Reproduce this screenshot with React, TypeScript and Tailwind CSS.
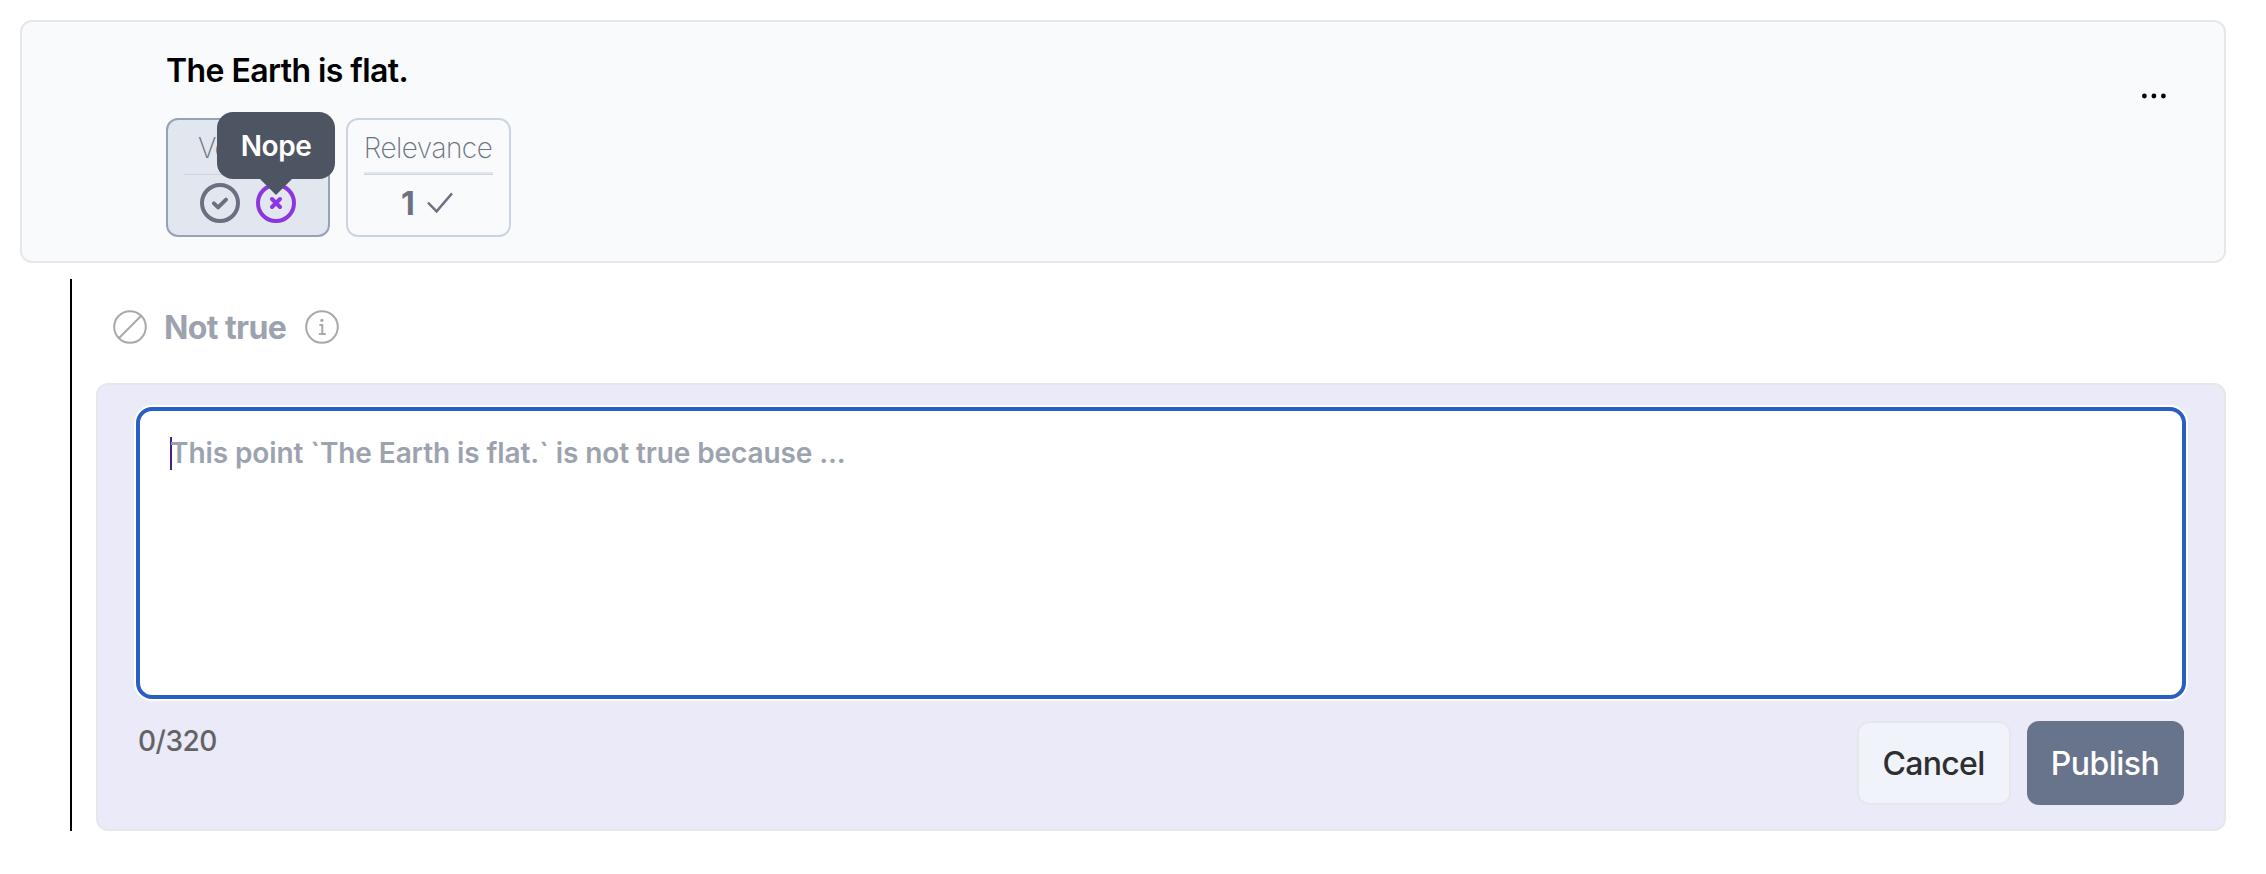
const FONT = 'font-[Inter,"Liberation_Sans",sans-serif]';

interface ScoreBoxProps {
  label: string;
  active?: boolean;
  children: React.ReactNode;
}

function ScoreBox({ label, active = false, children }: ScoreBoxProps) {
  return (
    <div
      className={`h-[119px] rounded-xl border-2 px-4 flex flex-col items-center ${
        active ? 'w-[164px] border-[#94a3b8] bg-[#e2e6ee]' : 'w-[165px] border-[#cbd5e1]'
      }`}>
      <div className="h-[52px] pt-[10px] pr-[1px] text-[28px] leading-9 font-extralight tracking-[-0.5px] text-[#6b7280]">{label}</div>
      {active
        ? <div className="mt-[2px] w-full h-px bg-[#cbd5e1]" />
        : <div className="w-full h-[3px] border-b border-[#cbd5e1] bg-[#e2e5ea]" />}
      <div className="h-[56px] flex items-center justify-center">{children}</div>
    </div>
  );
}

function Tooltip({ text }: { text: string }) {
  return (
    <div className="absolute left-1/2 -translate-x-1/2 bottom-[28px] flex flex-col items-center">
      <div className="w-[118px] h-[67px] rounded-2xl bg-[#4d5562] flex items-center justify-center text-[28px] font-semibold tracking-[-0.4px] text-white">
        {text}
      </div>
      <svg className="w-8 h-4" viewBox="0 0 32 16">
        <path d="M0 0h32L16 16z" fill="#4d5562" />
      </svg>
    </div>
  );
}

function PointCard() {
  return (
    <section className="h-[243px] rounded-xl border-2 border-[#e5e7eb] bg-[#f9fafc] pl-36 pr-14 flex justify-between">
      <div>
        <h1 className="mt-[29px] text-[32px] leading-10 font-semibold tracking-[-0.57px] text-black">The Earth is flat.</h1>
        <div className="mt-[27px] flex gap-4">
          <ScoreBox label="Veracity" active>
            <div className="flex gap-4">
              <svg className="w-10 h-10" viewBox="0 0 40 40" fill="none" stroke="#6b7080" strokeWidth="4" strokeLinecap="round" strokeLinejoin="round">
                <circle cx="20" cy="20" r="18" />
                <path d="M13.9 20.4l4.2 4 7.9-7.8" />
              </svg>
              <div className="relative">
                <svg className="w-10 h-10" viewBox="0 0 40 40" fill="none" stroke="#8b36e0" strokeWidth="4" strokeLinecap="round">
                  <circle cx="20" cy="20" r="18" />
                  <path d="M16 16l8 8M24 16l-8 8" />
                </svg>
                <Tooltip text="Nope" />
              </div>
            </div>
          </ScoreBox>
          <ScoreBox label="Relevance">
            <span className="pt-[2px] text-[32px] leading-10 font-bold text-[#6b7280]">1</span>
            <svg className="ml-3 mr-[3px] w-[26px] h-[22px]" viewBox="0 0 26 22" fill="none" stroke="#6b7280" strokeWidth="2.4">
              <path d="M1 10.6l8.6 8.8L25 1.4" />
            </svg>
          </ScoreBox>
        </div>
      </div>
      <button type="button" aria-label="More" className="mt-[62px] mr-[2px] w-6 h-6 self-start">
        <svg viewBox="0 0 24 24" fill="#000">
          <circle cx="2.4" cy="12" r="2.4" />
          <circle cx="11.9" cy="12" r="2.4" />
          <circle cx="21.4" cy="12" r="2.4" />
        </svg>
      </button>
    </section>
  );
}

function NegationHeader() {
  return (
    <div className="h-[104px] pl-[17px] pb-[8px] flex items-center">
      <svg className="w-[34px] h-[34px]" viewBox="0 0 34 34" fill="none" stroke="#a8a8a8" strokeWidth="2">
        <circle cx="17" cy="17" r="15.8" />
        <path d="M6 28L28 6" />
      </svg>
      <span className="ml-[17px] w-[125px] pt-[2px] text-[32px] leading-10 font-bold tracking-[-0.6px] text-[#9ca3af]">Not true</span>
      <svg className="ml-4 w-[34px] h-[34px]" viewBox="0 0 34 34" fill="none" stroke="#a8a8a8" strokeWidth="2">
        <circle cx="17" cy="17" r="15.8" />
        <path d="M14.4 14.9h2.9v9M13.8 24h7" />
        <circle cx="16.9" cy="10.3" r="1.6" fill="#a8a8a8" stroke="none" />
      </svg>
    </div>
  );
}

function NegationForm() {
  return (
    <div className="h-[448px] rounded-xl border-2 border-[#e5e7eb] bg-[#ebeaf8] pl-[38px] pr-[38px] pt-[22px]">
      <div className="h-[292px] rounded-[16px] border-4 border-[#285ec8] bg-white ring-2 ring-white pl-[30px] pt-[26px] flex">
        <span className="w-[2px] h-[33px] bg-[#4c1d85]" />
        <span className="-ml-[2px] h-[33px] text-[28px] leading-[32px] font-semibold tracking-[-0.1px] text-[#9ca3af] whitespace-nowrap">
          This point `The Earth is flat.` is not true because ...
        </span>
      </div>
      <div className="mt-[22px] flex justify-between">
        <span className="pl-[2px] text-[28px] leading-10 font-medium tracking-[-0.5px] text-[#636366]">0/320</span>
        <div className="flex gap-4 pr-[2px]">
          <button type="button" className="w-[154px] h-[84px] rounded-xl border-2 border-[#e5e7eb] bg-[#f0f3fa] pt-[2px] pr-[1px] text-[32px] font-medium tracking-[-0.7px] text-[#2e2e30]">
            Cancel
          </button>
          <button type="button" className="w-[157px] h-[84px] rounded-xl bg-[#68748b] pt-[2px] pr-[1px] text-[32px] font-medium tracking-[-0.5px] text-white">
            Publish
          </button>
        </div>
      </div>
    </div>
  );
}

export default function App() {
  return (
    <main className={`w-[2266px] h-[874px] bg-white pt-5 pl-5 pr-10 ${FONT}`}>
      <PointCard />
      <div className="mt-4 ml-[50px] border-l-2 border-black pl-6">
        <NegationHeader />
        <NegationForm />
      </div>
    </main>
  );
}
